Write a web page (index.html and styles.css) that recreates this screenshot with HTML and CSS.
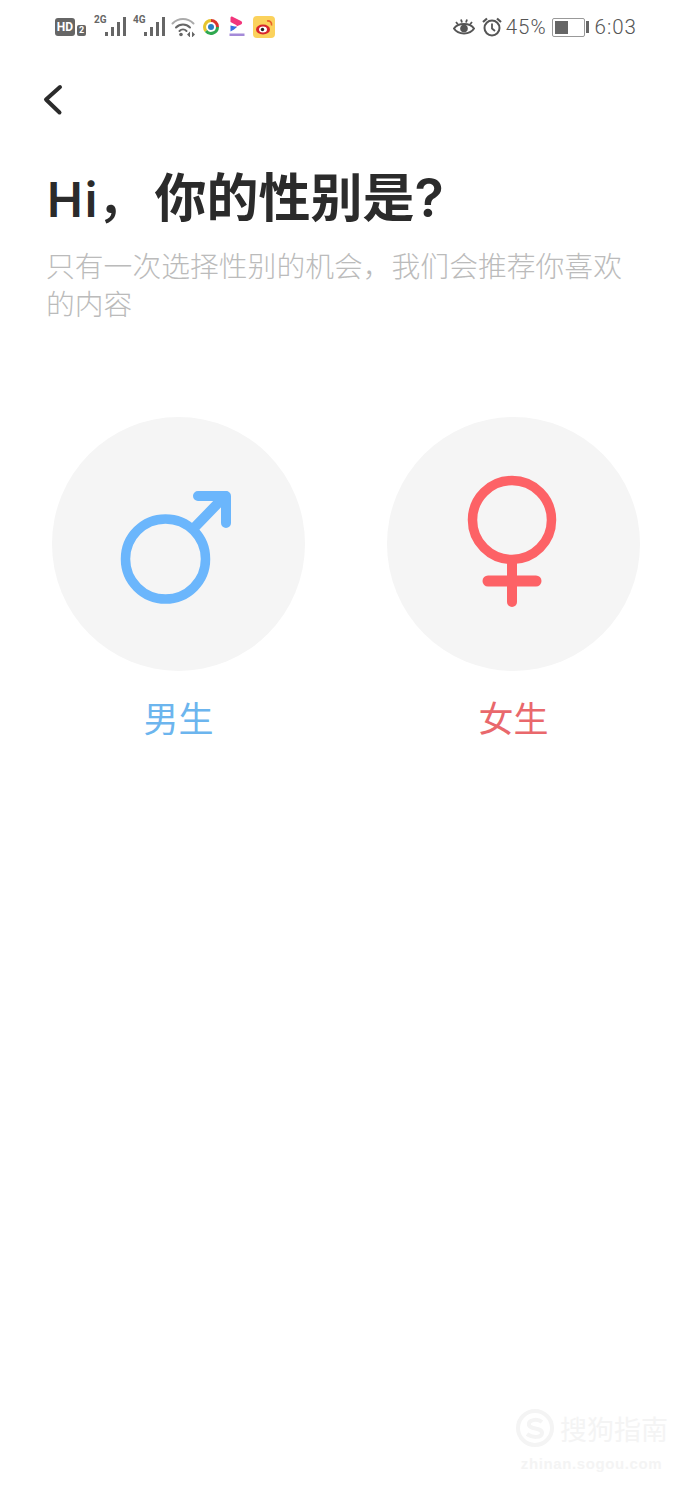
FILE: index.html
```html
<!DOCTYPE html>
<html lang="zh-CN">
<head>
    <meta charset="UTF-8">
    <meta name="viewport" content="width=device-width, initial-scale=1.0">
    <title>选择性别</title>
    <link rel="stylesheet" href="styles.css">
</head>
<body>
    <header class="status-bar">
        <div class="status-left">
            <span class="hd-badge">HD</span>
            <span class="sim-badge">2</span>
            <div class="signal">
                <span class="signal-label">2G</span>
                <svg width="21" height="20" viewBox="0 0 21 20"><g fill="#666"><rect x="0" y="15" width="3" height="4"/><rect x="6" y="10" width="3" height="9"/><rect x="12" y="5" width="3" height="14"/><rect x="18" y="0" width="3" height="19"/></g></svg>
            </div>
            <div class="signal">
                <span class="signal-label">4G</span>
                <svg width="21" height="20" viewBox="0 0 21 20"><g fill="#666"><rect x="0" y="15" width="3" height="4"/><rect x="6" y="10" width="3" height="9"/><rect x="12" y="5" width="3" height="14"/><rect x="18" y="0" width="3" height="19"/></g></svg>
            </div>
            <svg class="wifi" width="25" height="20" viewBox="0 0 25 20">
                <g fill="none" stroke-linecap="round">
                    <path d="M1.500 6.500C7.500 .5 16.500 .5 22.500 6.500" stroke="#aaa" stroke-width="2"/>
                    <path d="M5 10.500C9 6.500 15 6.500 19 10.500" stroke="#666" stroke-width="2"/>
                    <path d="M8.500 14C10.500 12 13.500 12 15.500 14" stroke="#666" stroke-width="2"/>
                </g>
                <circle cx="10" cy="17.500" r="1.800" fill="#666"/>
                <path d="M16 17.500l3-3v6zM21 14.500l3 3-3 3z" fill="#666"/>
            </svg>
            <svg class="app-news" width="16" height="16" viewBox="0 0 16 16">
                <g fill="none" stroke-width="3">
                    <path d="M3 12A6.500 6.500 0 0 1 8 1.500" stroke="#e6c52e"/>
                    <path d="M8 1.500A6.500 6.500 0 0 1 14.500 8" stroke="#d8342c"/>
                    <path d="M14.500 8A6.500 6.500 0 0 1 3 12" stroke="#2fa84f"/>
                </g>
                <circle cx="8" cy="8" r="3" fill="#2a7fc4"/>
            </svg>
            <svg class="app-play" width="16" height="22" viewBox="0 0 16 22">
                <path d="M3 0.500C2 0.500 1.500 1 1.500 2V6L8 9.500L5 11.500L12 8.500C13.500 7.500 13.500 6 12 5Z" fill="#f2357b"/>
                <path d="M1.500 9.500L8 11L5 13.500L1.500 15.500Z" fill="#3a6fe0"/>
                <rect x="0.500" y="17.500" width="15" height="2.500" fill="#a48ad8"/>
            </svg>
            <svg class="app-weibo" width="22" height="22" viewBox="0 0 22 22">
                <rect width="22" height="22" rx="4" fill="#fbd25c"/>
                <ellipse cx="10" cy="13.500" rx="7" ry="5" fill="#d8262c"/>
                <ellipse cx="10" cy="13.500" rx="4" ry="3" fill="#fff"/>
                <circle cx="9.500" cy="13.500" r="1.700" fill="#222"/>
                <path d="M14 5c3-.5 5 1.500 4.500 4.500" fill="none" stroke="#e8622c" stroke-width="1.600"/>
            </svg>
        </div>
        <div class="status-right">
            <svg class="eye" width="22" height="20" viewBox="0 0 22 20">
                <path d="M1 11.500C5 5.500 17 5.500 21 11.500C17 18 5 18 1 11.500Z" fill="none" stroke="#555" stroke-width="2"/>
                <circle cx="11" cy="11.500" r="3.800" fill="#555"/>
                <path d="M3 5l2 2.500M8 2.500l1 3M14 2.500l-1 3M19 5l-2 2.500" stroke="#555" stroke-width="1.800" fill="none"/>
            </svg>
            <svg class="alarm" width="20" height="20" viewBox="0 0 20 20">
                <circle cx="10" cy="11" r="7.500" fill="none" stroke="#555" stroke-width="2"/>
                <path d="M10 6.500V11.500L13 14" fill="none" stroke="#555" stroke-width="1.800"/>
                <path d="M1 5L5 1.500M19 5L15 1.500" stroke="#555" stroke-width="2.200"/>
            </svg>
            <span class="status-text">45%</span>
            <div class="battery">
                <div class="battery-body"><div class="battery-level"></div></div>
                <div class="battery-nub"></div>
            </div>
            <span class="status-text">6:03</span>
        </div>
    </header>

    <main>
        <button class="back">
            <svg width="24" height="36" viewBox="0 0 24 36"><path d="M19 5L5 17.500L18.500 30.500" fill="none" stroke="#2b2b2b" stroke-width="4" stroke-linecap="round" stroke-linejoin="round"/></svg>
        </button>

        <h1 class="title"><span class="title-hi">Hi</span><span class="title-comma">，</span>你的性别是<span class="title-mark">?</span></h1>
        <p class="subtitle">只有一次选择性别的机会，我们会推荐你喜欢的内容</p>

        <div class="genders">
            <div class="gender gender-male">
                <div class="gender-circle">
                    <svg width="253" height="253" viewBox="0 0 253 253">
                        <g fill="none" stroke="#6bb6fc" stroke-linecap="round" stroke-linejoin="round">
                            <circle cx="113.500" cy="142" r="40" stroke-width="9.500"/>
                            <path d="M142 111L173 79" stroke-width="10"/>
                            <path d="M146 79H174V106" stroke-width="10"/>
                        </g>
                    </svg>
                </div>
                <span class="gender-label">男生</span>
            </div>
            <div class="gender gender-female">
                <div class="gender-circle">
                    <svg width="253" height="253" viewBox="0 0 253 253">
                        <g fill="none" stroke="#fd6266" stroke-linecap="round">
                            <circle cx="125" cy="103" r="39.500" stroke-width="9.500"/>
                            <path d="M125 145V185" stroke-width="10"/>
                            <path d="M101 164H149" stroke-width="11"/>
                        </g>
                    </svg>
                </div>
                <span class="gender-label">女生</span>
            </div>
        </div>
    </main>

    <div class="watermark">
        <div class="watermark-top">
            <svg width="42" height="42" viewBox="0 0 42 42">
                <circle cx="20" cy="20" r="17" fill="none" stroke="#f4f4f4" stroke-width="4"/>
                <path d="M27 14C22 10 13 12 14 17C15 22 27 19 27 25C27 30 17 30 12 26" fill="none" stroke="#f4f4f4" stroke-width="4"/>
            </svg>
            <span class="watermark-name">搜狗指南</span>
        </div>
        <span class="watermark-url">zhinan.sogou.com</span>
    </div>
</body>
</html>
```

FILE: styles.css
```css
* {
    box-sizing: border-box;
}

html, body {
    margin: 0;
    height: 100%;
}

body {
    position: relative;
    background-color: white;
    font-family: "Noto Sans CJK SC", "Noto Sans", sans-serif;
    overflow: hidden;
}

.status-bar {
    display: flex;
    justify-content: space-between;
    align-items: center;
    height: 54px;
    padding: 0 55px;
    color: #666;
}

.status-left,
.status-right {
    display: flex;
    align-items: center;
}

.hd-badge {
    width: 20px;
    height: 18px;
    border-radius: 3px;
    background-color: #666;
    color: white;
    font: bold 12px/18px "Roboto", sans-serif;
    text-align: center;
}

.sim-badge {
    width: 9px;
    height: 11px;
    margin: 6px 0 0 2px;
    border-radius: 2px;
    background-color: #666;
    color: white;
    font: bold 9px/11px "Roboto", sans-serif;
    text-align: center;
}

.signal {
    display: flex;
    align-items: flex-start;
    margin-left: 8px;
}

.signal + .signal {
    margin-left: 7px;
}

.signal-label {
    width: 11px;
    margin-top: -3px;
    font: bold 10px/11px "Roboto", sans-serif;
    color: #666;
}

.wifi {
    margin-left: 6px;
}

.app-news {
    margin-left: 7px;
}

.app-play {
    margin-left: 10px;
}

.app-weibo {
    margin-left: 8px;
}

.alarm {
    margin-left: 7px;
}

.status-text {
    font: 300 20.500px/24px "Roboto", sans-serif;
    letter-spacing: 1px;
    color: #555;
}

.alarm + .status-text {
    margin-left: 4px;
}

.battery {
    display: flex;
    align-items: center;
    margin: 0 6px 0 5px;
}

.battery-body {
    width: 33px;
    height: 19px;
    padding: 2px;
    border: 1px solid #999;
    border-radius: 2px;
}

.battery-level {
    width: 48%;
    height: 100%;
    background-color: #666;
}

.battery-nub {
    width: 3px;
    height: 12px;
    margin-left: 1px;
    background-color: #666;
}

main {
    padding: 0 0 0 47px;
}

.back {
    display: block;
    margin: 28px 0 0 -6px;
    padding: 0;
    border: 0;
    background: none;
}

.back svg {
    display: block;
}

.title {
    margin: 41px 0 0;
    font-size: 52px;
    line-height: 72px;
    font-weight: 700;
    color: #2b2b2b;
}

.title-hi {
    margin-right: -2px;
    font-family: "Inter", sans-serif;
    font-size: 48px;
    font-weight: 600;
    letter-spacing: 2px;
}

.title-comma {
    margin-right: 5px;
    font-weight: 500;
}

.title-mark {
    font-family: "Inter", sans-serif;
    font-size: 54px;
    font-weight: 600;
}

.subtitle {
    width: 585px;
    margin: 10px 0 0 -1px;
    font-size: 28.800px;
    line-height: 38px;
    font-weight: 300;
    color: #bbbbbb;
}

.genders {
    display: flex;
    gap: 82px;
    margin: 95px 0 0 5px;
}

.gender {
    display: flex;
    flex-direction: column;
    align-items: center;
    gap: 22px;
    width: 253px;
}

.gender-circle {
    width: 253px;
    height: 254px;
    border-radius: 50%;
    background-color: #f5f5f5;
}

.gender-circle svg {
    display: block;
}

.gender-label {
    font-size: 35px;
    line-height: 48px;
    font-weight: 400;
}

.gender-male .gender-label {
    color: #6cb5ee;
}

.gender-female .gender-label {
    color: #e9686c;
}

/* sits over the page, bottom right corner */
.watermark {
    position: absolute;
    right: 24px;
    bottom: 25px;
    display: flex;
    flex-direction: column;
    align-items: center;
    gap: 4px;
    color: #f4f4f4;
}

.watermark-top {
    display: flex;
    align-items: center;
    gap: 3px;
}

.watermark-name {
    font-size: 27px;
    line-height: 36px;
}

.watermark-url {
    font: bold 15px/20px "Liberation Sans", sans-serif;
    letter-spacing: 0.6px;
}
```
